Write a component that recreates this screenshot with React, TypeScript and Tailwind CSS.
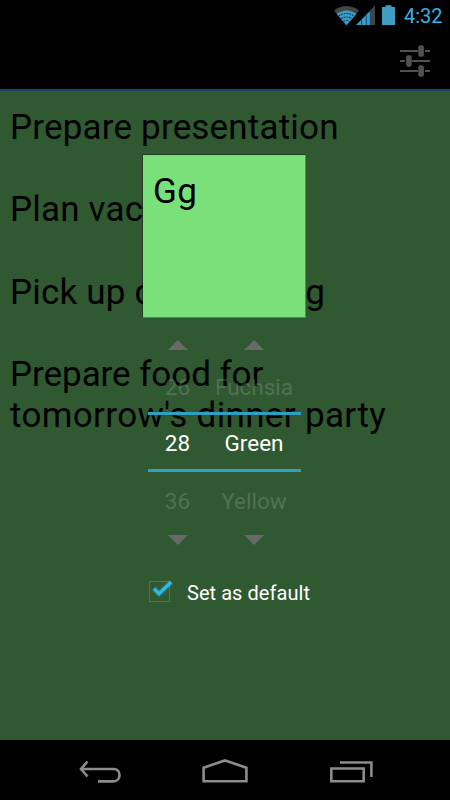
import type { ReactNode } from 'react';

function StatusBar() {
  return (
    <div className="flex h-[30px] shrink-0 items-start justify-end bg-black pr-[8px]">
      <svg width="64" height="30" viewBox="0 0 64 30" className="shrink-0">
        {/* wifi */}
        <path d="M1 10.5C8.5 4.5 18.5 4.5 26 10.5L13.5 25.3Z" fill="#444" />
        <path d="M3.6 14C9.5 9.2 17.5 9.2 23.4 14L13.5 25.3Z" fill="#3a9dc8" />
        <path d="M5.6 16.2C10.4 12.6 16.6 12.6 21.4 16.2M8 18.9C11.3 16.4 15.7 16.4 19 18.9M10.3 21.5C12.2 20.2 14.8 20.2 16.7 21.5" fill="none" stroke="#124058" strokeWidth="1.1" strokeDasharray="2 0.8" />
        {/* signal */}
        <path d="M37 10.5L42 5.5V25H37Z" fill="#444" />
        <path d="M23 25L37 11V25Z" fill="#3a9dc8" />
        <path d="M28.5 19V25M33.2 14V25M37.4 10V25" stroke="#14506e" strokeWidth="1" />
        {/* battery */}
        <path d="M49 7H52.5V5.3H58.5V7H62V25H49Z" fill="#419cc4" />
      </svg>
      <span className="ml-[7px] w-[38px] whitespace-nowrap text-[20px] leading-[32px] text-[#33b5e5]">4:32</span>
    </div>
  );
}

function ActionBar() {
  return (
    <div className="flex h-[61px] shrink-0 items-start justify-end border-b-2 border-[#154862] bg-black pr-[20px] pt-[15px]">
      <svg width="30" height="32" viewBox="0 0 30 32" fill="none">
        <path d="M0 6H18M25 6H30M0 16H5M12 16H30M0 26H18M25 26H30" stroke="#525252" strokeWidth="2" />
        <rect x="18.3" y="0.3" width="5.6" height="11.4" rx="2" fill="#525252" />
        <rect x="6.1" y="10.3" width="5.6" height="11.4" rx="2" fill="#525252" />
        <rect x="18.3" y="20.3" width="5.6" height="11.4" rx="2" fill="#525252" />
      </svg>
    </div>
  );
}

function NoteList() {
  return (
    <ul className="space-y-[41.2px] pl-[10px] pt-[16px] text-[35px] leading-[41.2px] tracking-[0.18px] text-black">
      <li>Prepare presentation</li>
      <li>Plan vacation</li>
      <li>Pick up dry cleaning</li>
      <li>
        <span className="tracking-[-0.05px]">Prepare food for</span>
        <br />
        <span className="tracking-[0.34px]">tomorrow's dinner party</span>
      </li>
    </ul>
  );
}

function Arrow({ down = false }: { down?: boolean }) {
  return (
    <svg width="20" height="10" viewBox="0 0 20 10" className="shrink-0">
      <path d={down ? 'M0 0H20L10 10Z' : 'M0 10H20L10 0Z'} fill="#696969" />
    </svg>
  );
}

interface PickerProps {
  values: [string, string, string];
  className: string;
}

function Picker({ values, className }: PickerProps) {
  const [prev, current, next] = values;
  return (
    <div className={`flex flex-col items-center text-[22.5px] ${className}`}>
      <Arrow />
      <span className="mt-[24px] h-[38px] leading-[26px] text-[#c8c8c8]/23">{prev}</span>
      <div className="flex h-[60px] w-full items-center justify-center border-y-3 border-[#2f9fc4] pt-[3px] text-white">
        <span>{current}</span>
      </div>
      <span className="mt-[16px] h-[47px] leading-[26px] text-[#c8c8c8]/23">{next}</span>
      <Arrow down />
    </div>
  );
}

function Checkbox({ children }: { children: ReactNode }) {
  return (
    <label className="mt-[28px] flex items-start">
      <svg width="32" height="32" viewBox="0 0 32 32" fill="none" className="-mt-[2px] shrink-0">
        <rect x="6.5" y="10.5" width="20" height="20" stroke="#567357" />
        <path d="M11 17.5L16 22.7L28.2 11" stroke="#33b5e5" strokeOpacity="0.15" strokeWidth="7" />
        <path d="M11 17.5L16 22.7L28.2 11" stroke="#33b5e5" strokeWidth="3.6" />
      </svg>
      <span className="ml-[12px] mt-[8px] whitespace-nowrap text-[20px] leading-[24px] tracking-[0.05px] text-white">{children}</span>
    </label>
  );
}

function NoteSettings() {
  return (
    <div className="absolute left-[143px] top-[64px] flex w-[180px] flex-col items-start">
      <div className="h-[163px] w-[163px] border-b border-r border-[#4f8f50] bg-[#79e07a] pl-[10px] pt-[16px] text-[35px] leading-[41px] tracking-[0.5px] text-black shadow-[-1px_-1px_0_0_rgba(0,0,0,0.35)]">
        Gg
      </div>
      <div className="ml-[5px] mt-[22px] flex">
        <Picker values={['26', '28', '36']} className="w-[59px]" />
        <Picker values={['Fuchsia', 'Green', 'Yellow']} className="w-[94px]" />
      </div>
      <Checkbox>Set as default</Checkbox>
    </div>
  );
}

function NavBar() {
  return (
    <div className="flex h-[60px] shrink-0 items-start bg-black pt-[18px]">
      <svg width="44" height="28" viewBox="0 0 44 28" fill="none" stroke="#8c8c8c" strokeWidth="2.6" className="ml-[78px]">
        <path d="M3 11H35.5C43.5 11 43.5 23.4 35.5 23.4H20M9.5 3.5L3 11L9.5 18.5" />
      </svg>
      <svg width="48" height="28" viewBox="0 0 48 28" fill="none" stroke="#8c8c8c" strokeWidth="2.6" className="ml-[79px]">
        <path d="M2.6 23.3V9.7L24 2.4L45.4 9.7V23.3Z" />
      </svg>
      <svg width="44" height="28" viewBox="0 0 44 28" fill="none" stroke="#8c8c8c" strokeWidth="2.6" className="ml-[80px]">
        <path d="M2.3 10.5H34.7V23.3H2.3ZM11 4.5H42.4V19" />
      </svg>
    </div>
  );
}

export default function App() {
  return (
    <div className="flex h-[800px] w-[450px] flex-col overflow-hidden bg-black font-['Roboto',sans-serif]">
      <StatusBar />
      <ActionBar />
      <main className="relative flex-1 bg-[#305931]">
        <NoteList />
        <NoteSettings />
      </main>
      <NavBar />
    </div>
  );
}
